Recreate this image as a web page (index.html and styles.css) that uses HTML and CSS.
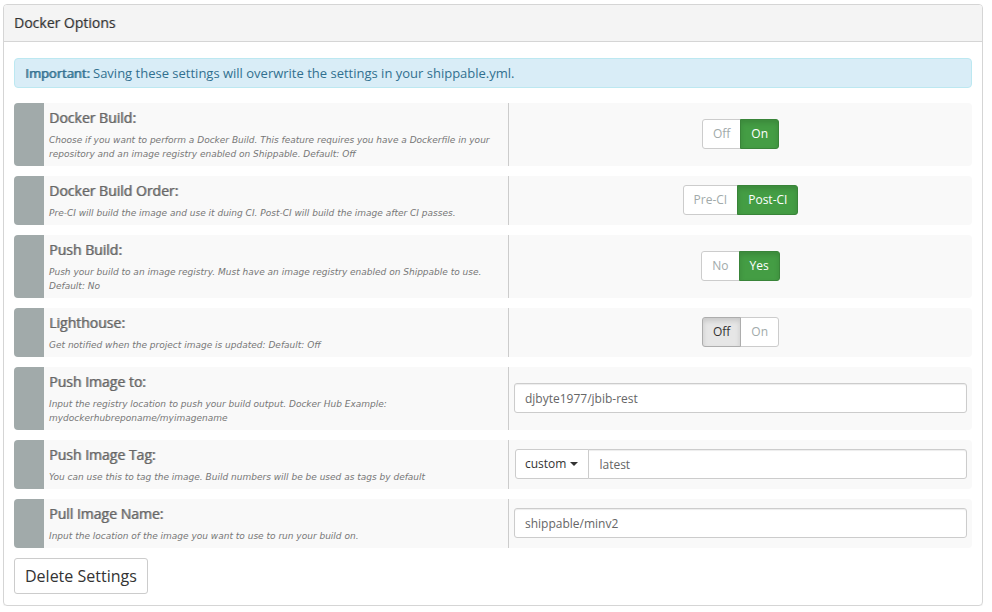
FILE: index.html
```html
<!DOCTYPE html>
<html lang="en">
<head>
<meta charset="utf-8">
<title>Docker Options</title>
<link rel="stylesheet" href="styles.css">
</head>
<body>
<section class="panel">
  <header class="panel-heading"><h1 class="panel-title">Docker Options</h1></header>
  <form class="panel-body">
    <p class="alert"><strong class="alert-lead">Important:</strong> Saving these settings will overwrite the settings in your shippable.yml.</p>

    <div class="options">
      <div class="option">
        <div class="option-info">
          <h2 class="option-name" id="build">Docker Build:</h2>
          <p class="option-help">Choose if you want to perform a Docker Build. This feature requires you have a Dockerfile in your repository and an image registry enabled on Shippable. Default: Off</p>
        </div>
        <div class="option-control">
          <div class="toggle" role="group" aria-labelledby="build">
            <button type="button" class="btn">Off</button><button type="button" class="btn btn-success" aria-pressed="true">On</button>
          </div>
        </div>
      </div>

      <div class="option">
        <div class="option-info">
          <h2 class="option-name" id="order">Docker Build Order:</h2>
          <p class="option-help">Pre-CI will build the image and use it duing CI. Post-CI will build the image after CI passes.</p>
        </div>
        <div class="option-control">
          <div class="toggle" role="group" aria-labelledby="order">
            <button type="button" class="btn">Pre-CI</button><button type="button" class="btn btn-success" aria-pressed="true">Post-CI</button>
          </div>
        </div>
      </div>

      <div class="option">
        <div class="option-info">
          <h2 class="option-name" id="push">Push Build:</h2>
          <p class="option-help">Push your build to an image registry. Must have an image registry enabled on Shippable to use. Default: No</p>
        </div>
        <div class="option-control">
          <div class="toggle" role="group" aria-labelledby="push">
            <button type="button" class="btn">No</button><button type="button" class="btn btn-success" aria-pressed="true">Yes</button>
          </div>
        </div>
      </div>

      <div class="option">
        <div class="option-info">
          <h2 class="option-name" id="lighthouse">Lighthouse:</h2>
          <p class="option-help">Get notified when the project image is updated: Default: Off</p>
        </div>
        <div class="option-control">
          <div class="toggle" role="group" aria-labelledby="lighthouse">
            <button type="button" class="btn btn-pressed" aria-pressed="true">Off</button><button type="button" class="btn">On</button>
          </div>
        </div>
      </div>

      <div class="option">
        <div class="option-info">
          <label class="option-name" for="push-image">Push Image to:</label>
          <p class="option-help">Input the registry location to push your build output. Docker Hub Example: mydockerhubreponame/myimagename</p>
        </div>
        <div class="option-control">
          <input class="field" id="push-image" type="text" value="djbyte1977/jbib-rest">
        </div>
      </div>

      <div class="option">
        <div class="option-info">
          <label class="option-name" for="push-tag">Push Image Tag:</label>
          <p class="option-help">You can use this to tag the image. Build numbers will be be used as tags by default</p>
        </div>
        <div class="option-control">
          <div class="input-group">
            <button type="button" class="btn btn-menu" aria-haspopup="true">custom<span class="caret"></span></button>
            <input class="field" id="push-tag" type="text" value="latest">
          </div>
        </div>
      </div>

      <div class="option">
        <div class="option-info">
          <label class="option-name" for="pull-image">Pull Image Name:</label>
          <p class="option-help">Input the location of the image you want to use to run your build on.</p>
        </div>
        <div class="option-control">
          <input class="field" id="pull-image" type="text" value="shippable/minv2">
        </div>
      </div>
    </div>

    <button type="button" class="btn-delete">Delete Settings</button>
  </form>
</section>
</body>
</html>
```
FILE: styles.css
```css
* { box-sizing: border-box; }

body {
  margin: 4px 9px 6px 3px;
  background: #fff;
  color: #333;
  font: 13px/18px "Open Sans", sans-serif;
}

h1, h2, p { margin: 0; }

button, input { font: inherit; }

.panel {
  border: 1px solid #d5d5d5;
  border-radius: 4px;
  box-shadow: 0 1px 1px rgba(0, 0, 0, .05);
  overflow: hidden;
}

.panel-heading {
  padding: 8px 10px;
  background: #f4f4f4;
  border-bottom: 1px solid #d5d5d5;
}

.panel-title {
  font-size: 14px;
  line-height: 20px;
  font-weight: 400;
  text-shadow: 1px 0 rgba(51, 51, 51, .3);
}

.panel-body { padding: 16px 10px 11px; }

.alert {
  margin-bottom: 15px;
  padding: 5px 10px;
  border: 1px solid #bce8f1;
  border-radius: 4px;
  background: #d9edf7;
  color: #31708f;
}

.alert-lead {
  font-weight: 400;
  text-shadow: 1px 0 rgba(49, 112, 143, .8);
}

.options {
  display: grid;
  gap: 10px;
  margin-bottom: 10px;
}

.option {
  display: grid;
  grid-template-columns: 1fr 1fr;
  border-left: 30px solid #a1aaaa;
  border-radius: 4px;
  background: #f9f9f9;
}

.option-info { padding: 5px; }

.option-name {
  display: block;
  margin-bottom: 5px;
  color: #666;
  font-size: 14px;
  line-height: 20px;
  font-weight: 400;
  text-shadow: 1px 0 rgba(102, 102, 102, .6);
}

.option-help {
  color: #777;
  font-family: "DejaVu Sans", Verdana, sans-serif;
  font-size: 9px;
  line-height: 14px;
  font-style: italic;
}

.option-control {
  display: flex;
  align-items: center;
  justify-content: center;
  padding: 0 5px 1px;
  border-left: 1px solid #ccc;
}

.toggle, .input-group { display: flex; }

.btn {
  height: 30px;
  padding: 0 10px;
  border: 1px solid #ccc;
  background: #fff;
  color: #a1aaaa;
  font-size: 12px;
  line-height: 18px;
}

.btn:first-child { border-radius: 3px 0 0 3px; }

.btn:last-child {
  margin-left: -1px;
  border-radius: 0 3px 3px 0;
}

.btn-success {
  border-color: #398439;
  background: #449d44;
  color: #fff;
  box-shadow: inset 0 3px 5px rgba(0, 0, 0, .125);
}

.btn-pressed {
  z-index: 1;
  border-color: #adadad;
  background: #e6e6e6;
  color: #333;
  box-shadow: inset 0 3px 5px rgba(0, 0, 0, .125);
}

.field {
  width: 100%;
  height: 30px;
  padding: 0 10px;
  border: 1px solid #ccc;
  border-radius: 3px;
  background: #fff;
  color: #666;
  font-size: 12px;
  box-shadow: inset 0 1px 1px rgba(0, 0, 0, .075);
}

.input-group { flex: 1; padding-left: 1px; }

.input-group .field {
  flex: 1;
  margin-left: -1px;
  border-radius: 0 3px 3px 0;
}

.btn-menu {
  display: flex;
  align-items: center;
  gap: 4px;
  padding: 0 10px 0 9px;
  color: #333;
}

.caret {
  border: 4px solid transparent;
  border-top-color: #333;
  border-bottom: 0;
}

.btn-delete {
  display: block;
  height: 36px;
  padding: 0 10px;
  border: 1px solid #ccc;
  border-radius: 3px;
  background: #fff;
  color: #333;
  font-size: 16px;
  line-height: 24px;
}
```
